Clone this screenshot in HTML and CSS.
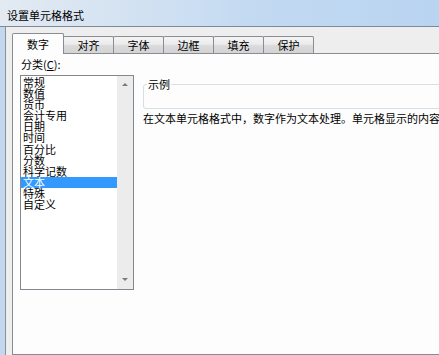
FILE: index.html
```html
<!DOCTYPE html>
<html lang="zh-CN">

<head>
    <meta charset="UTF-8">
    <title>设置单元格格式</title>
    <link rel="stylesheet" href="styles.css">
</head>

<body>
    <div class="window">
        <div class="titlebar">设置单元格格式</div>
        <div class="frame">
            <div class="dialog">
                <div class="tabs">
                    <div class="tab active">数字</div>
                    <div class="tab">对齐</div>
                    <div class="tab">字体</div>
                    <div class="tab">边框</div>
                    <div class="tab">填充</div>
                    <div class="tab">保护</div>
                </div>

                <div class="panel">
                    <div class="category">
                        <div class="label">分类(<u>C</u>):</div>
                        <div class="listbox">
                            <ul class="items">
                                <li>常规</li>
                                <li>数值</li>
                                <li>货币</li>
                                <li>会计专用</li>
                                <li>日期</li>
                                <li>时间</li>
                                <li>百分比</li>
                                <li>分数</li>
                                <li>科学记数</li>
                                <li class="selected">文本</li>
                                <li>特殊</li>
                                <li>自定义</li>
                            </ul>
                            <div class="scrollbar">
                                <span class="arrow up"></span>
                                <span class="arrow down"></span>
                            </div>
                        </div>
                    </div>

                    <div class="detail">
                        <fieldset class="sample">
                            <legend>示例</legend>
                        </fieldset>
                        <p class="desc">在文本单元格格式中，数字作为文本处理。单元格显示的内容与输入的内容完全一致。</p>
                    </div>
                </div>
            </div>
        </div>
    </div>
</body>

</html>
```

FILE: styles.css
```css
body {
    margin: 0;
    width: 439px;
    height: 355px;
    overflow: hidden;
    background-color: #eeeeee;
    font-family: "Noto Sans CJK SC", "Liberation Sans", sans-serif;
    font-size: 11px;
    color: #000;
}

.window {
    display: flex;
    flex-direction: column;
    height: 100%;
}

.titlebar {
    height: 27px;
    box-sizing: border-box;
    padding: 3px 0 0 7px;
    display: flex;
    align-items: center;
    background: linear-gradient(to right, #e3eaf2 0%, #d3e2f2 30%, #c2d9f2 60%, #b9d4f1 100%);
    border-bottom: 1px solid #7d8a98;
    white-space: nowrap;
}

.frame {
    flex: 1;
    display: flex;
    border-left: 5px solid #c3d8ef;
}

.dialog {
    flex: 1;
    display: flex;
    flex-direction: column;
    border-left: 1px solid #8592a2;
    background-color: #eeeeee;
    padding: 6px 0 0 6px;
}

/* tab strip */
.tabs {
    display: flex;
    align-items: flex-end;
    height: 20px;
}

.tab {
    width: 51px;
    height: 17px;
    box-sizing: border-box;
    margin-left: -1px;
    display: flex;
    justify-content: center;
    align-items: center;
    border: 1px solid #898c95;
    border-bottom: none;
    background: linear-gradient(to bottom, #f4f4f4 0%, #ebebeb 45%, #dadada 55%, #d4d4d4 100%);
    border-radius: 2px 2px 0 0;
}

.tab.active {
    width: 52px;
    height: 21px;
    margin-left: 0;
    margin-bottom: -1px;
    background: #fcfdfc;
    position: relative;
    z-index: 1;
}

/* page content */
.panel {
    flex: 1;
    width: 460px;
    display: flex;
    gap: 9px;
    border: 1px solid #898c95;
    background-color: #fcfdfc;
    padding: 4px 0 0 7px;
}

.category {
    display: flex;
    flex-direction: column;
}

.label {
    line-height: 13px;
    padding-left: 1px;
    margin-bottom: 4px;
}

.listbox {
    width: 114px;
    height: 215px;
    box-sizing: border-box;
    display: flex;
    border: 1px solid #828790;
    background-color: #fff;
}

.items {
    flex: 1;
    list-style: none;
    margin: 0;
    padding: 1px 0 0;
}

.items li {
    height: 11.1px;
    line-height: 11px;
    padding-left: 2px;
    white-space: nowrap;
}

.items li.selected {
    background-color: #3399ff;
    color: #fff;
}

.scrollbar {
    width: 16px;
    display: flex;
    flex-direction: column;
    justify-content: space-between;
    align-items: center;
    padding: 7px 0 8px;
    box-sizing: border-box;
    background-color: #ececec;
}

.arrow {
    width: 0;
    height: 0;
    border-left: 3px solid transparent;
    border-right: 3px solid transparent;
}

.arrow.up {
    border-bottom: 3px solid #7a7a7a;
}

.arrow.down {
    border-top: 3px solid #7a7a7a;
}

.detail {
    display: flex;
    flex-direction: column;
    padding-top: 20px;
}

.sample {
    width: 320px;
    height: 31px;
    box-sizing: border-box;
    margin: 0;
    padding: 0 0 0 3px;
    border: 1px solid #d5dfe5;
    border-radius: 3px;
}

.sample legend {
    padding: 0 1px;
    line-height: 12px;
}

.desc {
    margin: 3px 0 0;
    line-height: 13px;
    white-space: nowrap;
}
```
